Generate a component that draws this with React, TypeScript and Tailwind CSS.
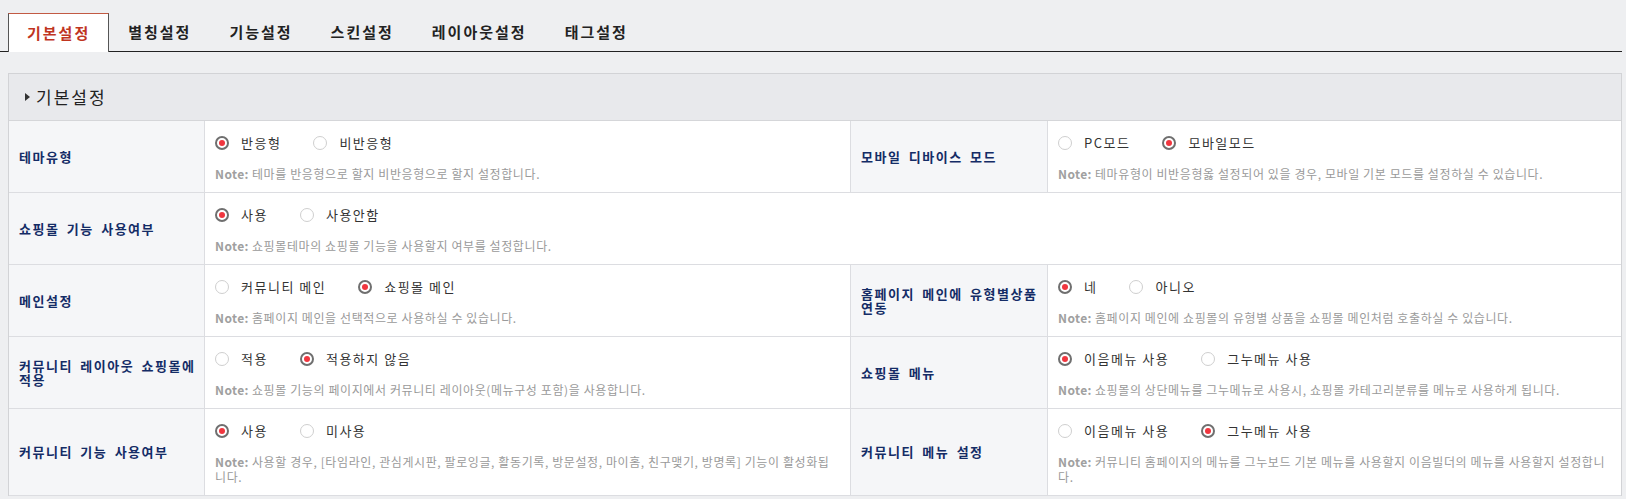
import React from "react";

interface Setting {
  label: string;
  options: string[];
  checked: number;
  note: string[];
}

interface Row {
  left: Setting;
  right?: Setting;
}

const TABS = ["기본설정", "별칭설정", "기능설정", "스킨설정", "레이아웃설정", "태그설정"];

const ROWS: Row[] = [
  {
    left: {
      label: "테마유형",
      options: ["반응형", "비반응형"],
      checked: 0,
      note: ["테마를 반응형으로 할지 비반응형으로 할지 설정합니다."],
    },
    right: {
      label: "모바일 디바이스 모드",
      options: ["PC모드", "모바일모드"],
      checked: 1,
      note: ["테마유형이 비반응형옳 설정되어 있을 경우, 모바일 기본 모드를 설정하실 수 있습니다."],
    },
  },
  {
    left: {
      label: "쇼핑몰 기능 사용여부",
      options: ["사용", "사용안함"],
      checked: 0,
      note: ["쇼핑몰테마의 쇼핑몰 기능을 사용할지 여부를 설정합니다."],
    },
  },
  {
    left: {
      label: "메인설정",
      options: ["커뮤니티 메인", "쇼핑몰 메인"],
      checked: 1,
      note: ["홈페이지 메인을 선택적으로 사용하실 수 있습니다."],
    },
    right: {
      label: "홈페이지 메인에 유형별상품 연동",
      options: ["네", "아니오"],
      checked: 0,
      note: ["홈페이지 메인에 쇼핑몰의 유형별 상품을 쇼핑몰 메인처럼 호출하실 수 있습니다."],
    },
  },
  {
    left: {
      label: "커뮤니티 레이아웃 쇼핑몰에 적용",
      options: ["적용", "적용하지 않음"],
      checked: 1,
      note: ["쇼핑몰 기능의 페이지에서 커뮤니티 레이아웃(메뉴구성 포함)을 사용합니다."],
    },
    right: {
      label: "쇼핑몰 메뉴",
      options: ["이음메뉴 사용", "그누메뉴 사용"],
      checked: 0,
      note: ["쇼핑몰의 상단메뉴를 그누메뉴로 사용시, 쇼핑몰 카테고리분류를 메뉴로 사용하게 됩니다."],
    },
  },
  {
    left: {
      label: "커뮤니티 기능 사용여부",
      options: ["사용", "미사용"],
      checked: 0,
      note: [
        "사용할 경우, [타임라인, 관심게시판, 팔로잉글, 활동기록, 방문설정, 마이홈, 친구맺기, 방명록] 기능이 활성화됩",
        "니다.",
      ],
    },
    right: {
      label: "커뮤니티 메뉴 설정",
      options: ["이음메뉴 사용", "그누메뉴 사용"],
      checked: 1,
      note: ["커뮤니티 홈페이지의 메뉴를 그누보드 기본 메뉴를 사용할지 이음빌더의 메뉴를 사용할지 설정합니", "다."],
    },
  },
];

const Radio = ({ on }: { on: boolean }) =>
  on ? (
    <span className="w-[14px] h-[14px] rounded-full border-2 border-[#6f6f6f] bg-white flex items-center justify-center shrink-0">
      <span className="w-[6px] h-[6px] rounded-full bg-[#f0363f]" />
    </span>
  ) : (
    <span className="w-[14px] h-[14px] rounded-full border border-[#cfcfcf] bg-white shrink-0" />
  );

const Label = ({ text }: { text: string }) => (
  <div className="flex items-center pl-[10px] pr-[8px] bg-[#f5f6f8] border-r border-b border-[#dcdde1] text-[13px] leading-[14px] font-bold tracking-[1.5px] [word-spacing:3px] text-[#142c66]">
    {text}
  </div>
);

const Value = ({ s, last }: { s: Setting; last?: boolean }) => (
  <div className={`pl-[10px] pt-[14px] pb-[11px] border-b border-[#dcdde1] ${last ? "" : "border-r"}`}>
    <div className="flex items-center h-4">
      {s.options.map((o, i) => (
        <label key={o} className="flex items-center mr-[32px]">
          <Radio on={i === s.checked} />
          <span className="ml-[12px] text-[13px] tracking-[1.5px] text-[#333]">{o}</span>
        </label>
      ))}
    </div>
    <div className="mt-[15px] text-[12px] tracking-[0.6px] leading-[15px] text-[#9a9a9a]">
      {s.note.map((line, i) => (
        <div key={i} className="whitespace-nowrap">
          {i === 0 && <b className="font-bold text-[#a0a0a0] tracking-[0.4px]">Note: </b>}
          {line}
        </div>
      ))}
    </div>
  </div>
);

export default function App() {
  return (
    <div className="min-h-[499px] bg-[#eeeff1] font-['Noto_Sans_CJK_KR','Liberation_Sans',sans-serif] overflow-hidden">
      {/* Tabs */}
      <div className="flex items-end h-[52px] pl-[8px] mr-[4px] border-b border-[#222]">
        {TABS.map((t, i) =>
          i === 0 ? (
            <div
              key={t}
              className="relative -mb-px h-[39px] px-[18px] flex items-center bg-white border border-b-0 border-[#555] border-t-[#c25a43] text-[15px] font-semibold tracking-[2px] text-[#c0351f]"
            >
              {t}
            </div>
          ) : (
            <div key={t} className="h-[38px] px-[19px] flex items-center text-[15px] font-semibold tracking-[2px] text-[#222]">
              {t}
            </div>
          )
        )}
      </div>

      {/* Panel */}
      <div className="mt-[21px] ml-[8px] mr-[4px] border border-b-0 border-[#d2d3d6] bg-white">
        <div className="h-[47px] flex items-center pl-[16px] bg-[#e8e9ec] border-b border-[#d5d6d9]">
          <span className="w-0 h-0 border-y-[4px] border-y-transparent border-l-[5px] border-l-[#333] mr-[6px]" />
          <span className="text-[17px] tracking-[2px] text-[#222]">기본설정</span>
        </div>
        <div className="grid grid-cols-[196px_646px_197px_1fr]">
          {ROWS.map((r, i) => (
            <React.Fragment key={i}>
              <Label text={r.left.label} />
              {r.right ? (
                <>
                  <Value s={r.left} />
                  <Label text={r.right.label} />
                  <Value s={r.right} last />
                </>
              ) : (
                <div className="col-span-3">
                  <Value s={r.left} last />
                </div>
              )}
            </React.Fragment>
          ))}
        </div>
      </div>
    </div>
  );
}
